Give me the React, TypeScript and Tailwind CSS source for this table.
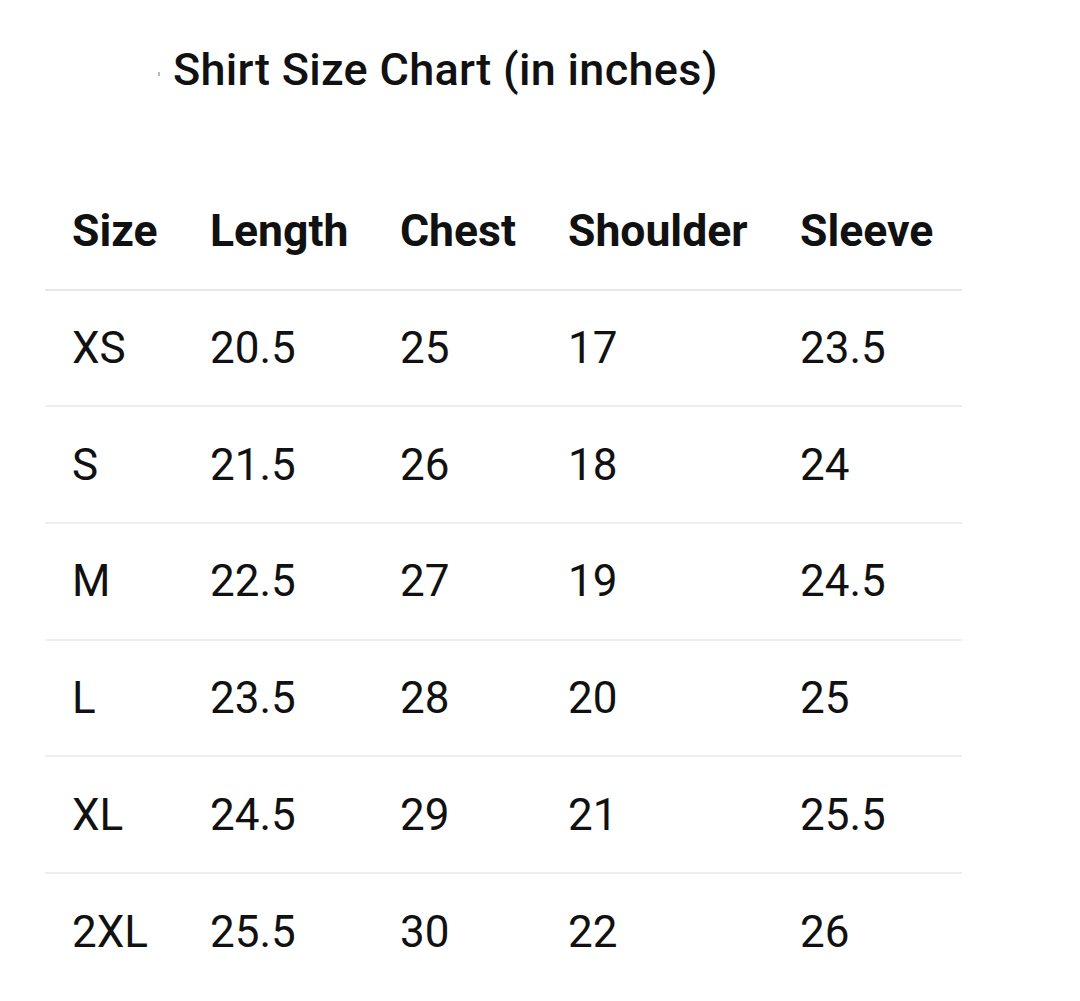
import React from "react";

const rows = [
  ["XS", "20.5", "25", "17", "23.5"],
  ["S", "21.5", "26", "18", "24"],
  ["M", "22.5", "27", "19", "24.5"],
  ["L", "23.5", "28", "20", "25"],
  ["XL", "24.5", "29", "21", "25.5"],
  ["2XL", "25.5", "30", "22", "26"],
];

const head = ["Size", "Length", "Chest", "Shoulder", "Sleeve"];

const gridCls =
  "grid grid-cols-[138px_190px_168px_232px_1fr] pl-[27px] items-center h-[116.7px]";

export default function App() {
  return (
    <div
      className="w-[1080px] h-[1001px] bg-white text-[#111111] overflow-hidden"
      style={{ fontFamily: "Roboto, 'Liberation Sans', sans-serif" }}
    >
      <div className="pt-[41px] pl-[173px] h-[174px] flex items-start">
        <h1 className="relative text-[45px] leading-[58px] font-medium tracking-[0.3px]">
          <span className="absolute left-[-15px] top-[31px] w-[2px] h-[4px] bg-[#bbbbbb]" />
          Shirt Size Chart (in inches)
        </h1>
      </div>
      <div className="ml-[45px] w-[917px]">
        <div className={gridCls + " border-b-2 border-[#e6e6e6]"}>
          {head.map((h) => (
            <div key={h} className="text-[44.5px] font-bold leading-none">
              {h}
            </div>
          ))}
        </div>
        {rows.map((r, i) => (
          <div
            key={r[0]}
            className={
              gridCls +
              (i < rows.length - 1 ? " border-b-2 border-[#eeeeee]" : "")
            }
          >
            {r.map((c, j) => (
              <div key={j} className="text-[44px] font-normal leading-none">
                {c}
              </div>
            ))}
          </div>
        ))}
      </div>
    </div>
  );
}
